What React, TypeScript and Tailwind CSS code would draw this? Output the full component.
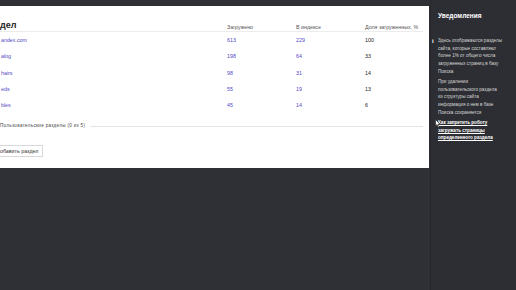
const rows = [
  { name: "andex.com", loaded: "613", indexed: "229", share: "100" },
  { name: "alog", loaded: "198", indexed: "64", share: "33" },
  { name: "hairs", loaded: "98", indexed: "31", share: "14" },
  { name: "eds", loaded: "55", indexed: "19", share: "13" },
  { name: "bles", loaded: "45", indexed: "14", share: "6" },
]

const Cursor = () => (
  <svg width="6" height="9" viewBox="0 0 6 9" className="absolute left-[435px] top-[119px]">
    <path d="M0.5 0.5 L0.5 7 L2 5.6 L3.2 8.3 L4.2 7.8 L3 5.2 L5 5.2 Z" fill="#fff" stroke="#222" strokeWidth="0.6" />
  </svg>
)

export default function App() {
  return (
    <div
      className="relative flex h-[290px] w-[516px] overflow-hidden bg-[#2f3035]"
      style={{ fontFamily: '"Liberation Sans", Arial, sans-serif' }}
    >
      {/* main area */}
      <div className="flex w-[430px] flex-col pt-[6px]">
        <div className="flex h-[162px] w-[429px] flex-col bg-white pr-[6px]">
          <div className="mt-[8px] grid h-[18px] grid-cols-[227px_69px_69px_1fr] items-end border-b border-[#ececec] text-[5.3px] leading-[8px] text-[#555]">
            <span className="mb-[1px] text-[9px] font-semibold leading-[10px] text-[#222]">дел</span>
            <span>Загружено</span>
            <span>В индексе</span>
            <span>Доля загруженных, %</span>
          </div>
          <div className="mt-[1px] flex flex-col">
            {rows.map((r) => (
              <div
                key={r.name}
                className="grid h-[16.3px] grid-cols-[227px_69px_69px_1fr] items-center text-[5.3px] text-[#5249c6]"
              >
                <span className="pl-[1px]">{r.name}</span>
                <span>{r.loaded}</span>
                <span>{r.indexed}</span>
                <span className="text-[#222]">{r.share}</span>
              </div>
            ))}
          </div>
          <div className="mt-[8px] flex h-[8px] items-center gap-[5px] text-[4.5px] tracking-[0.35px] text-[#444]">
            <span className="whitespace-nowrap">Пользовательские разделы (0 из 5)</span>
            <div className="h-px flex-1 bg-[#e4e4e4]" />
          </div>
          <div className="mt-[15px] flex">
            <button className="flex h-[12px] items-center border border-l-0 border-[#d8d8d8] pr-[4px] text-[5.3px] text-[#333]">
              обавить раздел
            </button>
          </div>
        </div>
      </div>

      {/* notifications sidebar */}
      <aside className="flex w-[86px] flex-col border-l border-[#26272b] bg-[#2d2e33] pl-[7px] pr-[2px] pt-[11px] text-[4.6px] leading-[7.7px] text-[#d6d6d6]">
        <div className="text-[6.5px] font-semibold leading-[10px] text-white">Уведомления</div>
        <div className="relative mt-[16px] whitespace-nowrap">
          <span className="absolute -left-[6px] top-[1px] text-[6px] font-bold leading-[7px] text-white">i</span>
          <p>
            Здесь отображаются разделы<br />
            сайта, которые составляют<br />
            более 1% от общего числа<br />
            загруженных страниц в базу<br />
            Поиска
          </p>
          <p className="mt-[2.5px]">
            При удалении<br />
            пользовательского раздела<br />
            из структуры сайта<br />
            информация о нем в базе<br />
            Поиска сохраняется
          </p>
          <p className="mt-[2.5px] font-bold text-white underline">
            Как запретить роботу<br />
            загружать страницы<br />
            определенного раздела
          </p>
        </div>
      </aside>
      <Cursor />
    </div>
  )
}
